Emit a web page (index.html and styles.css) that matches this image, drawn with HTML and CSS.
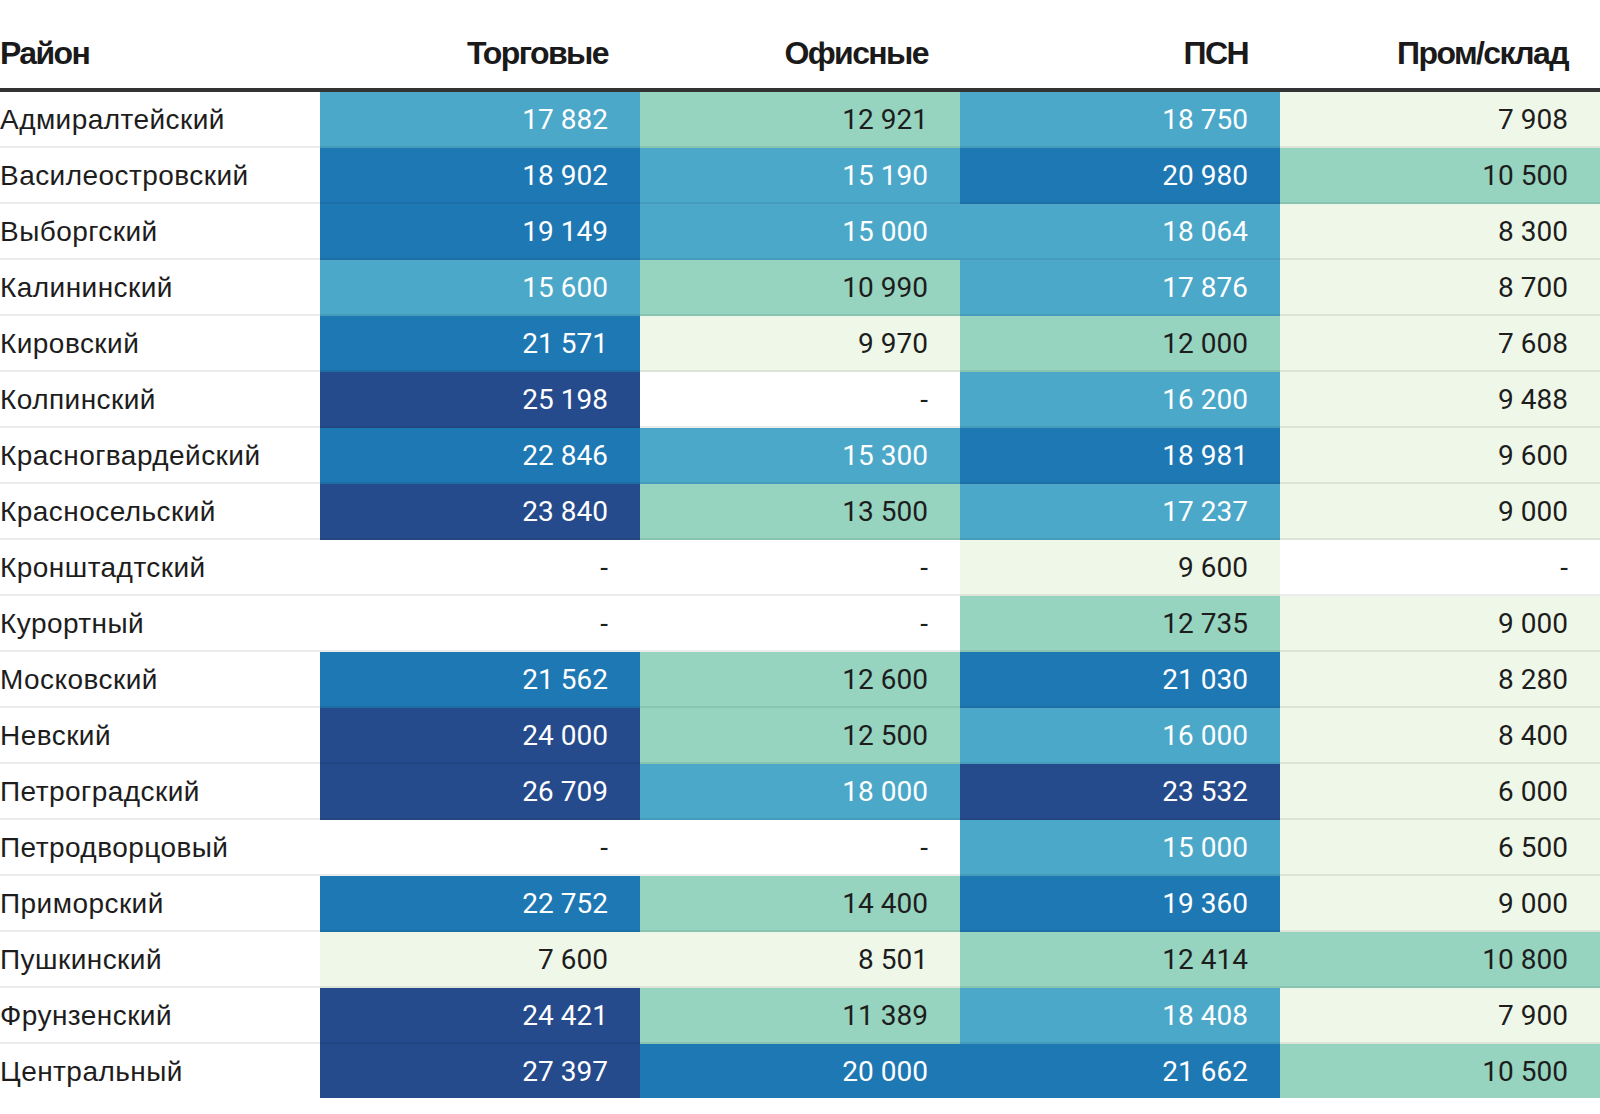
FILE: index.html
```html
<!DOCTYPE html>
<html lang="ru">
<head>
<meta charset="utf-8">
<title>Ставки аренды по районам</title>
<link rel="stylesheet" href="styles.css">
</head>
<body>
<table class="heat">
  <colgroup>
    <col class="c-name"><col class="c-val"><col class="c-val"><col class="c-val"><col class="c-val">
  </colgroup>
  <thead>
    <tr>
      <th class="h-name">Район</th>
      <th class="h-num">Торговые</th>
      <th class="h-num">Офисные</th>
      <th class="h-num">ПСН</th>
      <th class="h-num">Пром/склад</th>
    </tr>
  </thead>
  <tbody>
    <tr><td class="name">Адмиралтейский</td><td class="num q3">17 882</td><td class="num q2">12 921</td><td class="num q3">18 750</td><td class="num q1">7 908</td></tr>
    <tr><td class="name">Василеостровский</td><td class="num q4">18 902</td><td class="num q3">15 190</td><td class="num q4">20 980</td><td class="num q2">10 500</td></tr>
    <tr><td class="name">Выборгский</td><td class="num q4">19 149</td><td class="num q3">15 000</td><td class="num q3">18 064</td><td class="num q1">8 300</td></tr>
    <tr><td class="name">Калининский</td><td class="num q3">15 600</td><td class="num q2">10 990</td><td class="num q3">17 876</td><td class="num q1">8 700</td></tr>
    <tr><td class="name">Кировский</td><td class="num q4">21 571</td><td class="num q1">9 970</td><td class="num q2">12 000</td><td class="num q1">7 608</td></tr>
    <tr><td class="name">Колпинский</td><td class="num q5">25 198</td><td class="num q0">-</td><td class="num q3">16 200</td><td class="num q1">9 488</td></tr>
    <tr><td class="name">Красногвардейский</td><td class="num q4">22 846</td><td class="num q3">15 300</td><td class="num q4">18 981</td><td class="num q1">9 600</td></tr>
    <tr><td class="name">Красносельский</td><td class="num q5">23 840</td><td class="num q2">13 500</td><td class="num q3">17 237</td><td class="num q1">9 000</td></tr>
    <tr><td class="name">Кронштадтский</td><td class="num q0">-</td><td class="num q0">-</td><td class="num q1">9 600</td><td class="num q0">-</td></tr>
    <tr><td class="name">Курортный</td><td class="num q0">-</td><td class="num q0">-</td><td class="num q2">12 735</td><td class="num q1">9 000</td></tr>
    <tr><td class="name">Московский</td><td class="num q4">21 562</td><td class="num q2">12 600</td><td class="num q4">21 030</td><td class="num q1">8 280</td></tr>
    <tr><td class="name">Невский</td><td class="num q5">24 000</td><td class="num q2">12 500</td><td class="num q3">16 000</td><td class="num q1">8 400</td></tr>
    <tr><td class="name">Петроградский</td><td class="num q5">26 709</td><td class="num q3">18 000</td><td class="num q5">23 532</td><td class="num q1">6 000</td></tr>
    <tr><td class="name">Петродворцовый</td><td class="num q0">-</td><td class="num q0">-</td><td class="num q3">15 000</td><td class="num q1">6 500</td></tr>
    <tr><td class="name">Приморский</td><td class="num q4">22 752</td><td class="num q2">14 400</td><td class="num q4">19 360</td><td class="num q1">9 000</td></tr>
    <tr><td class="name">Пушкинский</td><td class="num q1">7 600</td><td class="num q1">8 501</td><td class="num q2">12 414</td><td class="num q2">10 800</td></tr>
    <tr><td class="name">Фрунзенский</td><td class="num q5">24 421</td><td class="num q2">11 389</td><td class="num q3">18 408</td><td class="num q1">7 900</td></tr>
    <tr><td class="name">Центральный</td><td class="num q5">27 397</td><td class="num q4">20 000</td><td class="num q4">21 662</td><td class="num q2">10 500</td></tr>
  </tbody>
</table>
</body>
</html>
```

FILE: styles.css
```css
html, body {
  margin: 0;
  padding: 0;
  background: #ffffff;
}

.heat {
  width: 1600px;
  table-layout: fixed;
  border-collapse: separate;
  border-spacing: 0;
  color: #1d1d1d;
}

.c-name, .c-val {
  width: 320px;
}

.heat th {
  font-family: "Liberation Sans", Arial, sans-serif;
  font-weight: bold;
  font-size: 32px;
  letter-spacing: -1.6px;
  line-height: 36px;
  padding: 35px 32px 17px 0;
  border-bottom: 4px solid #333333;
  color: #1a1a1a;
  white-space: nowrap;
}

.heat th.h-name {
  text-align: left;
  padding-right: 0;
}

.heat th.h-num {
  text-align: right;
}

.heat td {
  height: 52px;
  line-height: 52px;
  padding: 2px 0 0 0;
  border-bottom: 2px solid rgba(0, 0, 0, 0.075);
  white-space: nowrap;
}

.heat tbody tr:last-child td {
  border-bottom: 0;
}

.heat td.name {
  font-family: "Liberation Sans", Arial, sans-serif;
  font-size: 28px;
  letter-spacing: 0.45px;
  text-align: left;
  color: #1d1d1d;
}

.heat td.num {
  font-family: Roboto, "Liberation Sans", sans-serif;
  font-size: 28px;
  font-variant-numeric: tabular-nums;
  text-align: right;
  padding-right: 32px;
}

.q0 { background: #ffffff; color: #1d1d1d; }
.q1 { background: #eff8e8; color: #1d1d1d; }
.q2 { background: #96d4bf; color: #1d1d1d; }
.q3 { background: #4ba8c9; color: #ffffff; }
.q4 { background: #1e78b4; color: #ffffff; }
.q5 { background: #264b8c; color: #ffffff; }
```
